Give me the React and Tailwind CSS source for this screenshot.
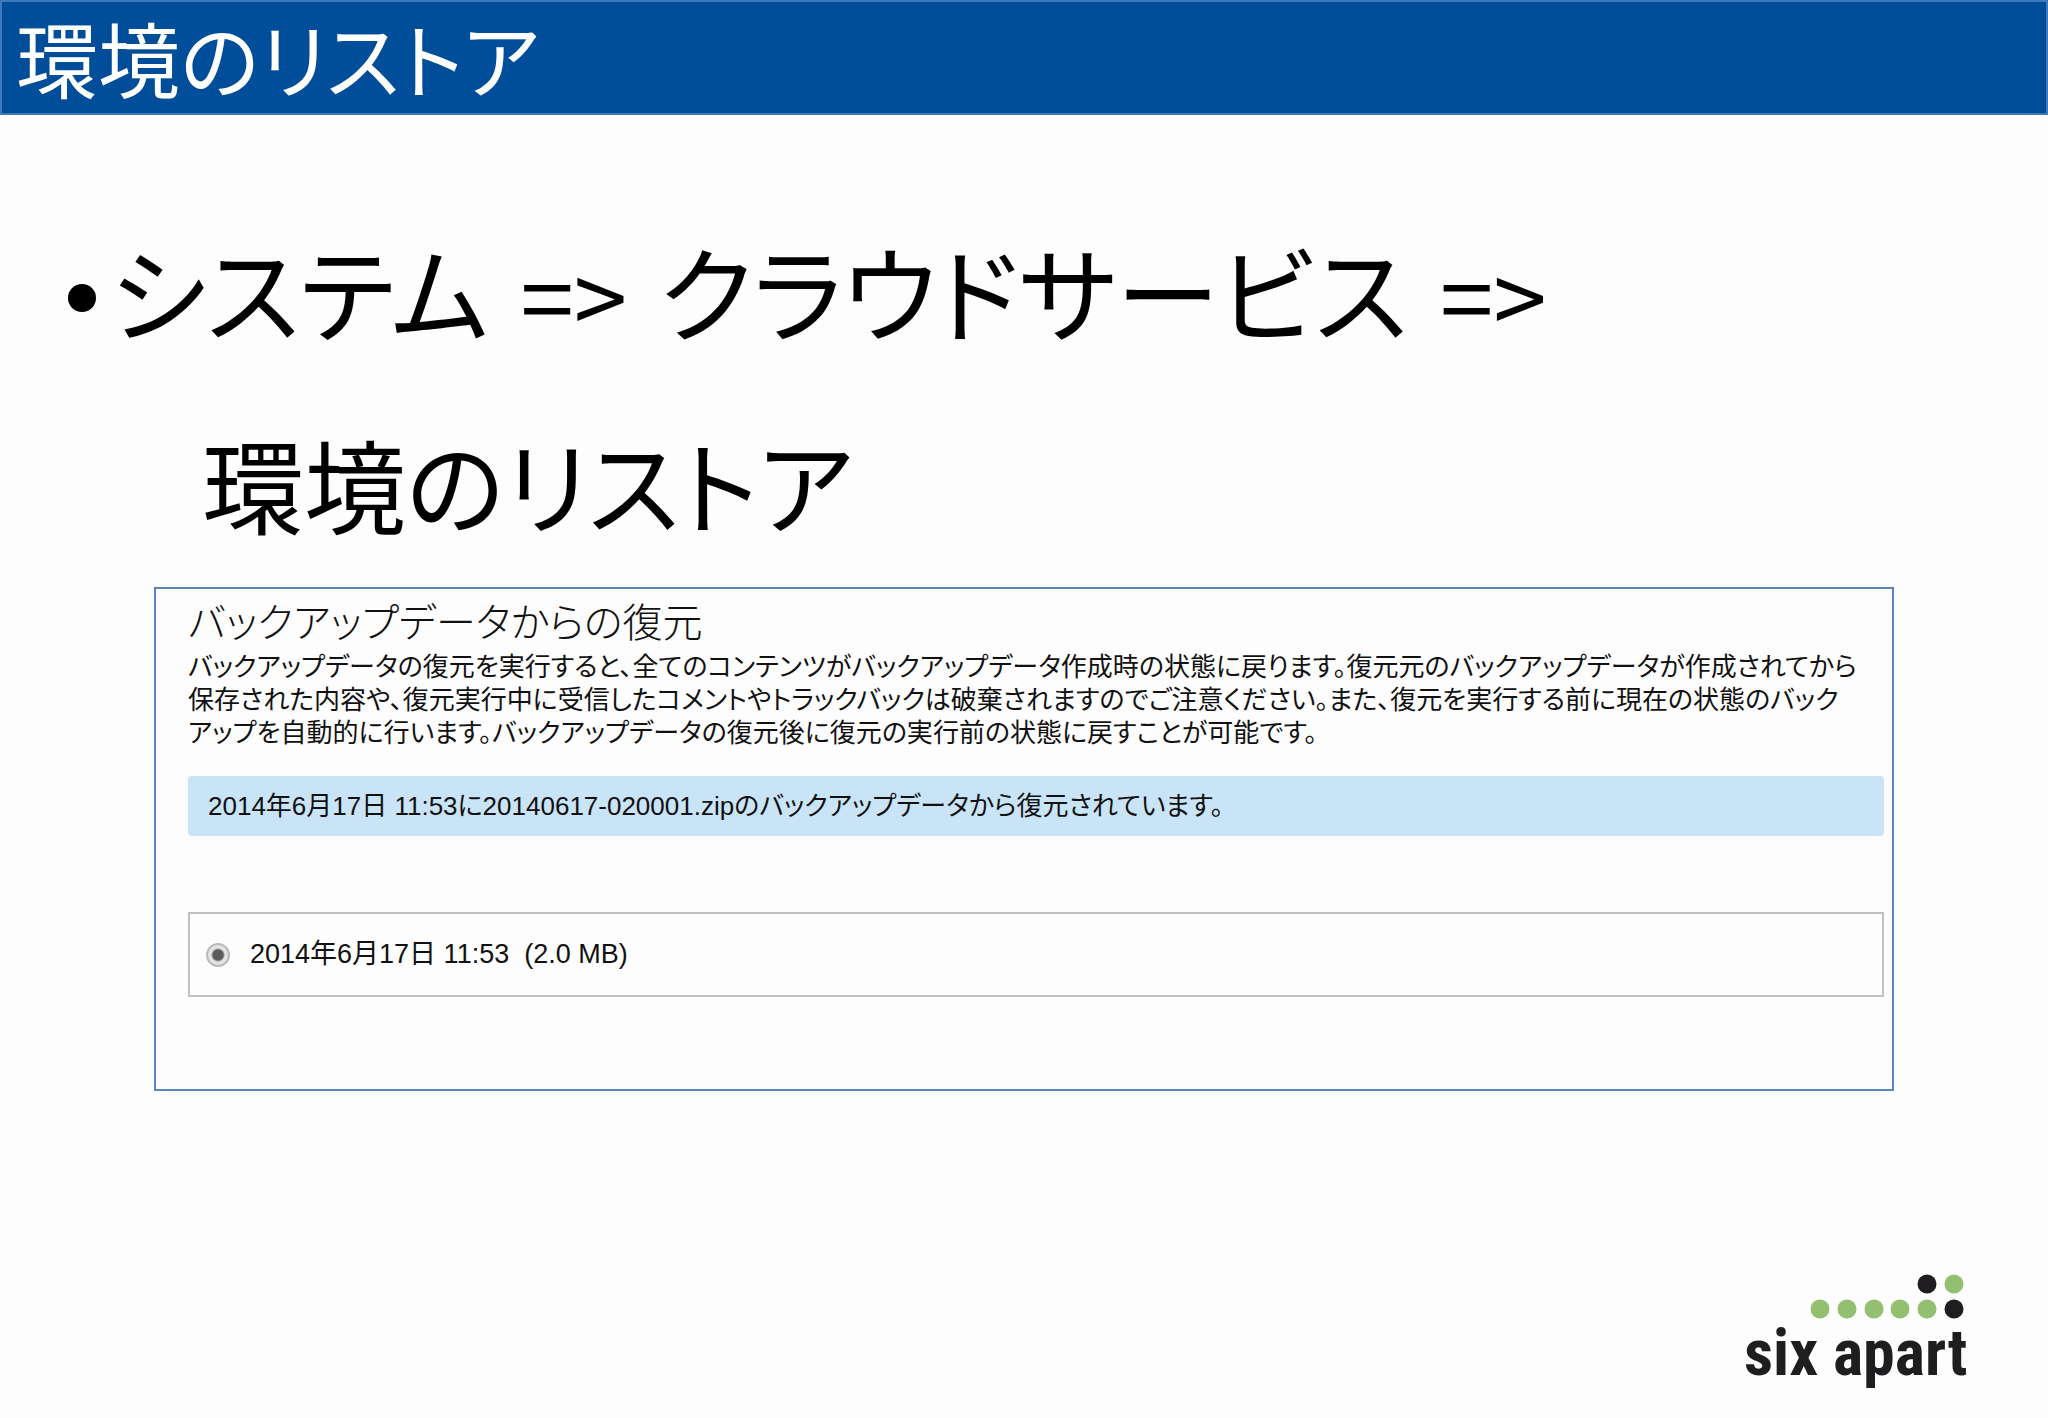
import React, { useState } from 'react';

const DESCRIPTION = [
  'バックアップデータの復元を実行すると、全てのコンテンツがバックアップデータ作成時の状態に戻ります。復元元のバックアップデータが作成されてから',
  '保存された内容や、復元実行中に受信したコメントやトラックバックは破棄されますのでご注意ください。また、復元を実行する前に現在の状態のバック',
  'アップを自動的に行います。バックアップデータの復元後に復元の実行前の状態に戻すことが可能です。',
];

const BACKUPS = [
  { id: 'b1', label: '2014年6月17日 11:53\u00a0 (2.0 MB)' },
];

const LOGO_DOTS = [
  { x: 183, y: 9, color: '#1f1d20' },
  { x: 210, y: 9, color: '#93bf70' },
  { x: 76, y: 34, color: '#93bf70' },
  { x: 103, y: 34, color: '#93bf70' },
  { x: 130, y: 34, color: '#93bf70' },
  { x: 156, y: 34, color: '#93bf70' },
  { x: 183, y: 34, color: '#93bf70' },
  { x: 210, y: 34, color: '#1f1d20' },
];

// ──────────────────────────────────────────────────────────────

const Logo = () => (
  <svg width="224" height="120" viewBox="0 -1 224 120" role="img" aria-label="six apart">
    {LOGO_DOTS.map(d => (
      <circle key={`${d.x}-${d.y}`} cx={d.x} cy={d.y} r="9.5" fill={d.color} />
    ))}
    <text
      x="0"
      y="100"
      fill="#1f1d20"
      className="font-['Liberation_Sans_Narrow','Roboto_Condensed','Open_Sans_Condensed','Roboto',sans-serif] font-bold text-[64px]"
    >
      six apart
    </text>
  </svg>
);

const Arrow = () => (
  <span className="text-[96px]">=&gt;</span>
);

const RestorePanel = () => {
  const [selected, setSelected] = useState('b1');

  return (
    <section className="mx-[154px] border-2 border-[#5b84bd] pl-8 pr-2 pt-3 pb-[92px] text-[#111] text-[26px] whitespace-nowrap">
      <h2 className="text-[40px] leading-[44px] font-light">バックアップデータからの復元</h2>
      <p className="mt-1.5 leading-[33px]">
        {DESCRIPTION.map(line => (
          <span key={line} className="block">{line}</span>
        ))}
      </p>

      <div className="mt-[26px] h-[60px] flex items-center rounded bg-[#cae4f7] px-5">
        2014年6月17日 11:53に20140617-020001.zipのバックアップデータから復元されています。
      </div>

      <div className="mt-[76px] h-[85px] flex items-center border-2 border-[#bfbfc4] px-4 text-[27px]">
        {BACKUPS.map(b => (
          <label key={b.id} className="flex items-center gap-5">
            <input
              type="radio"
              name="backup"
              checked={selected === b.id}
              onChange={() => setSelected(b.id)}
              className="appearance-none size-6 rounded-full border-2 border-[#b9b9b9] bg-[radial-gradient(circle,#5c5c5c_0_5px,#e4e4e4_7px)]"
            />
            {b.label}
          </label>
        ))}
      </div>
    </section>
  );
};

const App = () => {
  return (
    <div className="min-h-screen flex flex-col bg-[#fdfdfd] text-black font-['Liberation_Sans','Noto_Sans_CJK_JP',sans-serif] [font-feature-settings:'palt']">
      <header className="h-[115px] flex items-center border-2 border-[#3f79bd] bg-[#004d99] px-3.5 pt-3">
        <h1 className="text-[82px] leading-none text-white">環境のリストア</h1>
      </header>

      <main className="pt-20">
        <ul className="px-[68px] text-[104px] leading-[190px] font-['Noto_Sans_CJK_JP',sans-serif]">
          <li className="flex items-center gap-3.5">
            <span className="mt-4 size-7 rounded-full bg-black" />
            <span className="flex h-[190px] items-baseline gap-8">
              <span>システム</span>
              <Arrow />
              <span>クラウドサービス</span>
              <Arrow />
            </span>
          </li>
        </ul>
        <p className="mt-3 pl-[202px] text-[102px] leading-[190px]">環境のリストア</p>
        <RestorePanel />
      </main>

      <footer className="mt-auto flex justify-end pr-20 pb-6">
        <Logo />
      </footer>
    </div>
  );
};

export default App;
